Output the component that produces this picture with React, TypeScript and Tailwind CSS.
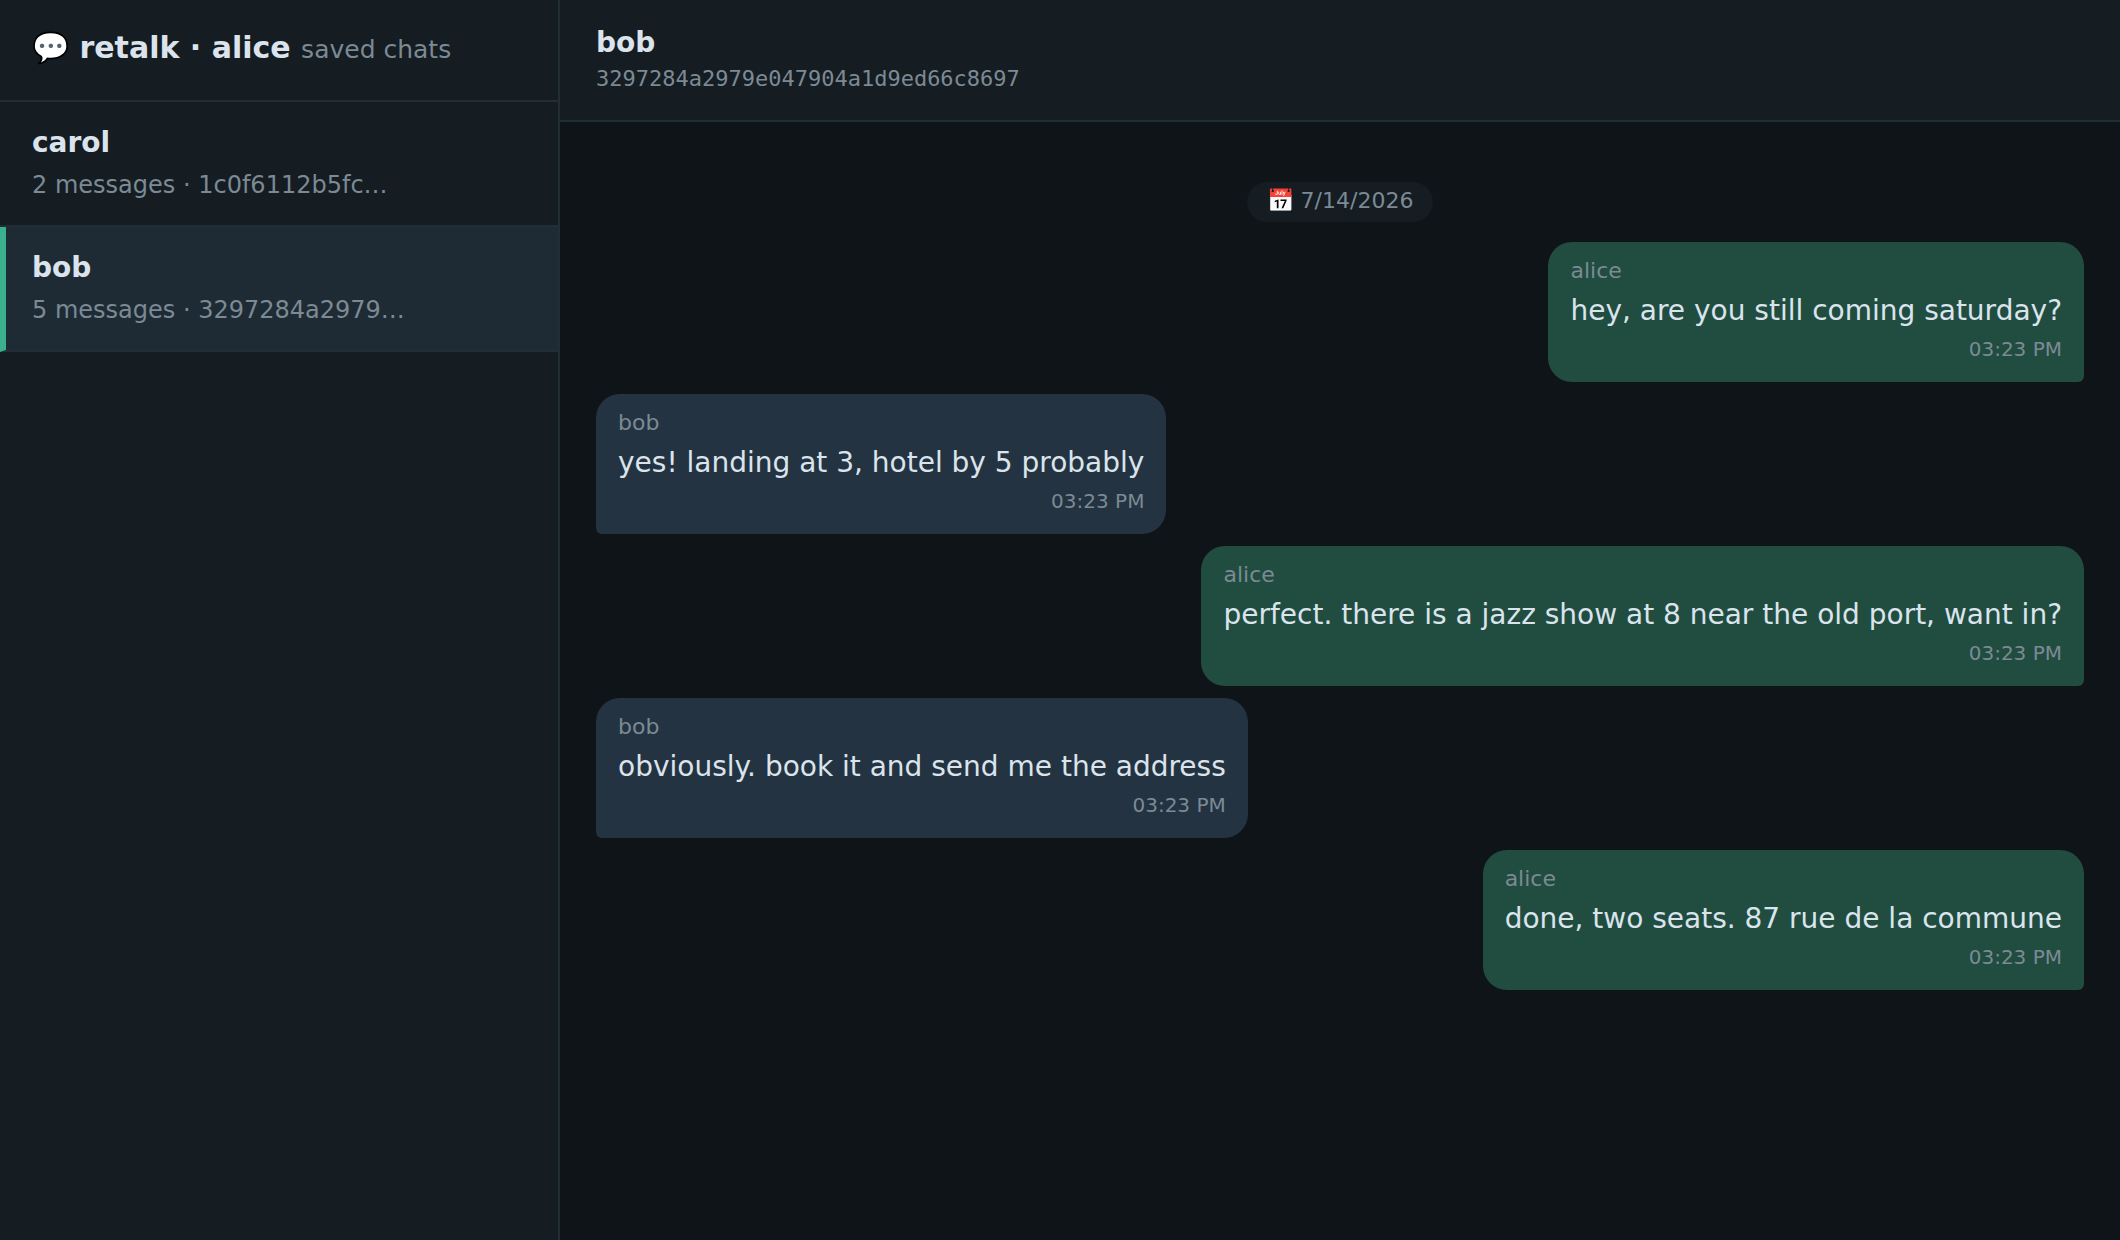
import { useState } from "react";

interface Message {
  from: string;
  text: string;
  time: string;
}

interface Chat {
  name: string;
  id: string;
  count: number;
  date: string;
  messages: Message[];
}

const ME = "alice";

const chats: Chat[] = [
  {
    name: "carol",
    id: "1c0f6112b5fc",
    count: 2,
    date: "7/14/2026",
    messages: [],
  },
  {
    name: "bob",
    id: "3297284a2979e047904a1d9ed66c8697",
    count: 5,
    date: "7/14/2026",
    messages: [
      { from: "alice", text: "hey, are you still coming saturday?", time: "03:23 PM" },
      { from: "bob", text: "yes! landing at 3, hotel by 5 probably", time: "03:23 PM" },
      { from: "alice", text: "perfect. there is a jazz show at 8 near the old port, want in?", time: "03:23 PM" },
      { from: "bob", text: "obviously. book it and send me the address", time: "03:23 PM" },
      { from: "alice", text: "done, two seats. 87 rue de la commune", time: "03:23 PM" },
    ],
  },
];

function ChatItem({ chat, active, onSelect }: { chat: Chat; active: boolean; onSelect: () => void }) {
  return (
    <li>
      <button
        type="button"
        onClick={onSelect}
        className={`block w-full cursor-pointer border-b-2 border-b-[#222e36] pt-5 pr-8 pb-[22px] text-left ${
          active ? "border-l-6 border-l-[#3ab08f] bg-[#1f2b34] pl-[26px]" : "pl-8"
        }`}
      >
        <span className="block text-[28px] leading-[42px] font-bold">{chat.name}</span>
        <span className="mt-[3px] block text-[24px] leading-9 text-[#7b8a94]">
          {chat.count} messages · {chat.id.slice(0, 12)}…
        </span>
      </button>
    </li>
  );
}

function Bubble({ message }: { message: Message }) {
  const mine = message.from === ME;

  return (
    <li
      className={`max-w-[72%] rounded-3xl px-[22px] pt-3 pb-[18px] ${
        mine ? "self-end rounded-br-md bg-[#204d40]" : "self-start rounded-bl-md bg-[#243341]"
      }`}
    >
      <div className="text-[22px] leading-[34px] text-[#7b8a94]">{message.from}</div>
      <div className="text-[28px] leading-[46px] break-words">{message.text}</div>
      <div className="text-right text-[20px] leading-[30px] text-[#7b8a94]">{message.time}</div>
    </li>
  );
}

export default function App() {
  const [selected, setSelected] = useState("bob");
  const chat = chats.find((c) => c.name === selected) ?? chats[0];

  return (
    <div className="flex min-h-screen bg-[#0f1418] font-['DejaVu_Sans',sans-serif] text-[#dbe4ec]">
      <aside className="w-[560px] shrink-0 border-r-2 border-[#222e36] bg-[#151c22]">
        <header className="border-b-2 border-[#222e36] px-8 pt-[26px] pb-[30px]">
          <h1 className="text-[30px] leading-[44px] font-bold">
            💬 retalk · {ME}{" "}
            <span className="text-[25px] leading-none font-normal text-[#7b8a94]">saved chats</span>
          </h1>
        </header>
        <ul>
          {chats.map((c) => (
            <ChatItem
              key={c.name}
              chat={c}
              active={c.name === selected}
              onSelect={() => setSelected(c.name)}
            />
          ))}
        </ul>
      </aside>

      <main className="flex min-w-0 flex-1 flex-col">
        <header className="border-b-2 border-[#222e36] bg-[#151c22] px-9 pt-5 pb-7">
          <h2 className="text-[28px] leading-[46px] font-bold">{chat.name}</h2>
          <p className="font-['DejaVu_Sans_Mono',monospace] text-[22px] leading-[26px] text-[#7b8a94]">{chat.id}</p>
        </header>
        <ul className="flex flex-col gap-3 px-9 pt-[60px] pb-9">
          <li className="mb-2 self-center rounded-full bg-[#151c22] px-5 pb-0.5 text-[22px] leading-[38px] text-[#7b8a94]">
            📅 {chat.date}
          </li>
          {chat.messages.map((message, i) => (
            <Bubble key={i} message={message} />
          ))}
        </ul>
      </main>
    </div>
  );
}
